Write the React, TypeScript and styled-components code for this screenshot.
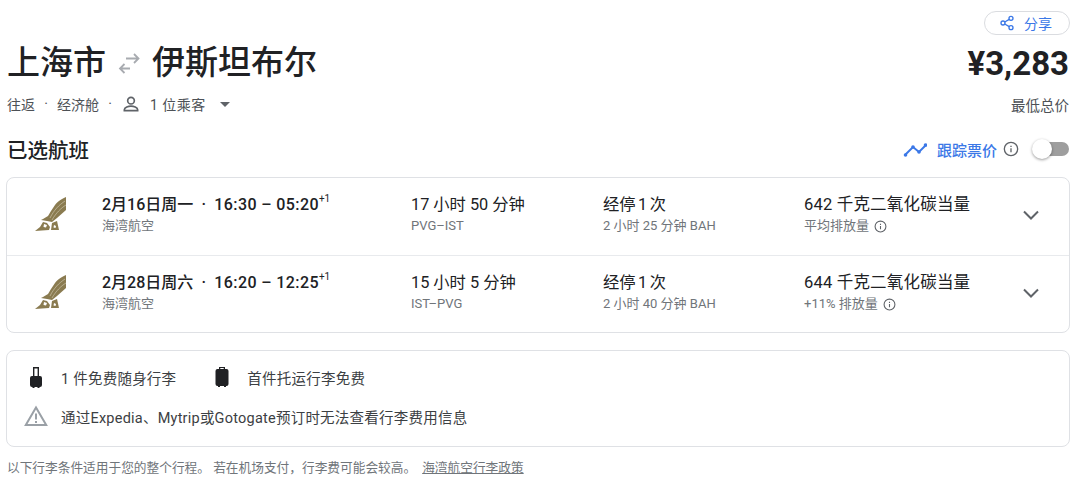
import React from "react";
import styled, { createGlobalStyle } from "styled-components";

const Global = createGlobalStyle`
  html, body { margin: 0; padding: 0; background: #fff; }
  body { font-family: Roboto, "Noto Sans CJK SC", sans-serif; color: #202124; }
`;

const Page = styled.div`
  width: 1080px;
  height: 485px;
  overflow: hidden;
  box-sizing: border-box;
  padding: 11px 10px 0 6px;
  display: flex;
  flex-direction: column;
`;
const ShareRow = styled.div`
  display: flex;
  justify-content: flex-end;
`;
const ShareButton = styled.div`
  width: 86px;
  height: 24px;
  box-sizing: border-box;
  border: 1px solid #dadce0;
  border-radius: 12px;
  display: flex;
  align-items: center;
  padding-left: 14px;
  gap: 9px;
  color: #3b78e7;
  font-size: 14px;
`;
const HeadRow = styled.div`
  display: flex;
  justify-content: space-between;
  align-items: center;
  height: 56px;
`;
const Title = styled.div`
  display: flex;
  align-items: center;
  gap: 11px;
  font-size: 33px;
  font-weight: 500;
  line-height: 56px;
  padding-left: 1px;
`;
const Price = styled.div`
  font-size: 33px;
  font-weight: 700;
  padding-right: 1px;
`;
const SubRow = styled.div`
  display: flex;
  justify-content: space-between;
  align-items: center;
  height: 26px;
  padding-left: 1px;
  font-size: 14px;
  color: #4d5156;
`;
const Meta = styled.div`
  display: flex;
  align-items: center;
`;
const Dot = styled.span`
  width: 22px;
  text-align: center;
`;
const Pax = styled.span`
  margin-left: 9px;
  letter-spacing: 0.5px;
`;
const Caret = styled.span`
  margin-left: 14px;
  width: 0;
  height: 0;
  border-left: 5px solid transparent;
  border-right: 5px solid transparent;
  border-top: 5px solid #5f6368;
`;
const LowPrice = styled.div`
  padding-right: 1px;
  font-size: 14.500px;
`;
const SectionRow = styled.div`
  display: flex;
  justify-content: space-between;
  align-items: center;
  height: 34px;
  margin-top: 15px;
  padding-left: 1px;
`;
const SectionTitle = styled.div`
  font-size: 20.500px;
  font-weight: 500;
`;
const Track = styled.div`
  display: flex;
  align-items: center;
  color: #3b78e7;
  font-size: 15px;
  font-weight: 500;
`;
const TrackLabel = styled.span`
  margin-left: 10px;
`;
const InfoWrap = styled.span<{ $ml: number }>`
  display: inline-flex;
  margin-left: ${(p) => p.$ml}px;
  color: #5f6368;
`;
const Switch = styled.div`
  position: relative;
  margin-left: 14px;
  width: 36px;
  height: 14px;
  border-radius: 7px;
  background: #9e9e9e;
  margin-right: 1px;
`;
const Knob = styled.div`
  position: absolute;
  left: -1px;
  top: -3px;
  width: 20px;
  height: 20px;
  border-radius: 50%;
  background: #fff;
  box-shadow: 0 1px 3px rgba(0, 0, 0, 0.4);
`;
const Card = styled.div`
  margin-top: 11px;
  border: 1px solid #dfe1e5;
  border-radius: 8px;
  box-sizing: border-box;
`;
const Row = styled.div`
  height: 77px;
  box-sizing: border-box;
  display: grid;
  grid-template-columns: 95px 309px 192px 201px 1fr 50px;
  padding-top: 15px;
  & + & {
    border-top: 1px solid #e8eaed;
  }
`;
const LogoCell = styled.div`
  padding: 3px 0 0 26px;
`;
const Cell = styled.div`
  display: flex;
  flex-direction: column;
`;
const Main = styled.div`
  font-size: 16.300px;
  line-height: 24px;
  color: #202124;
  white-space: nowrap;
`;
const StopMain = styled(Main)`
  word-spacing: -1.500px;
`;
const Co2Main = styled(Main)`
  font-size: 16.500px;
  letter-spacing: 0.200px;
`;
const BoldMain = styled(Main)`
  font-weight: 500;
  font-size: 16px;
  display: flex;
  align-items: baseline;
`;
const Sep = styled.span`
  width: 21px;
  text-align: center;
`;
const Times = styled.span`
  letter-spacing: 0.400px;
`;
const Sup = styled.sup`
  font-size: 10px;
  line-height: 0;
  font-weight: 400;
  position: relative;
  top: -1px;
  align-self: flex-start;
  margin-top: 7px;
`;
const Sub = styled.div`
  font-size: 13px;
  line-height: 20px;
  margin-top: -1px;
  color: #70757a;
  white-space: nowrap;
  display: flex;
  align-items: center;
`;
const Chevron = styled.div`
  padding-top: 10px;
  color: #5f6368;
`;
const Bag = styled.div`
  margin-top: 17px;
  height: 97px;
  box-sizing: border-box;
  border: 1px solid #dfe1e5;
  border-radius: 8px;
  padding: 14px 0 0 17px;
  display: flex;
  flex-direction: column;
  gap: 15px;
  font-size: 14.500px;
  letter-spacing: 0.230px;
  color: #3c4043;
`;
const BagRow = styled.div`
  display: flex;
  align-items: center;
  height: 24px;
`;
const BagItem = styled.div`
  display: flex;
  align-items: center;
  gap: 13px;
  margin-right: 34px;
`;
const IconBox = styled.span`
  width: 24px;
  display: inline-flex;
  justify-content: center;
`;
const Foot = styled.div`
  margin-top: 12px;
  padding-left: 1px;
  font-size: 12.700px;
  line-height: 18px;
  color: #70757a;
`;
const FootLink = styled.span`
  margin-left: 6px;
  text-decoration: underline;
`;

const Info = ({ s = 14 }: { s?: number }) => (
  <svg width={s} height={s} viewBox="0 0 24 24" fill="none" stroke="currentColor" strokeWidth="2">
    <circle cx="12" cy="12" r="10" />
    <path d="M12 11v6M12 7v2" />
  </svg>
);

const Logo = () => (
  <svg width="36" height="38" viewBox="0 0 36 38">
    <path
      fill="#8a7b50"
      d="M33 1 C27 4 24 6 22 9 L18 15 L15 20 L10 23 L8 24 L14 25 L19 26 L24 22 L33 14 Z"
    />
    <path stroke="#e4dfcd" strokeWidth="0.500" fill="none" d="M32 5 C26 9 21 14 17 22 M33 9 C28 12 23 17 19 24" />
    <path fill="#8a7b50" d="M14 27 L10 26 L7 31 L2 35 L16 34 L17 31 Z" />
    <path fill="#8a7b50" d="M19 27 L24 25 L26 34 L18 34 Z" />
    <path fill="#fff" d="M11 28l3 1-1 2.500-2.500-.500zM21 29l2 1-.500 2-2-.500z" />
  </svg>
);

const flights = [
  {
    date: "2月16日周一",
    time: "16:30 – 05:20",
    dur: "17 小时 50 分钟",
    route: "PVG–IST",
    stop: "2 小时 25 分钟 BAH",
    co2: "642 千克二氧化碳当量",
    note: "平均排放量",
  },
  {
    date: "2月28日周六",
    time: "16:20 – 12:25",
    dur: "15 小时 5 分钟",
    route: "IST–PVG",
    stop: "2 小时 40 分钟 BAH",
    co2: "644 千克二氧化碳当量",
    note: "+11% 排放量",
  },
];

export default function App() {
  return (
    <Page>
      <Global />
      <ShareRow>
        <ShareButton>
          <svg width="16" height="16" viewBox="0 0 24 24" fill="none" stroke="#3b78e7" strokeWidth="2">
            <circle cx="18" cy="5" r="3" />
            <circle cx="6" cy="12" r="3" />
            <circle cx="18" cy="19" r="3" />
            <path d="M8.600 10.500l6.800-4M8.600 13.500l6.800 4" />
          </svg>
          分享
        </ShareButton>
      </ShareRow>
      <HeadRow>
        <Title>
          <span>上海市</span>
          <svg width="24" height="24" viewBox="0 0 24 24" fill="none" stroke="#a8abb0" strokeWidth="1.800">
            <path d="M13 17.500H3M7.500 13l-4.500 4.500 4.500 4.500M9 7.500h12M17 3l4.500 4.500L17 12" />
          </svg>
          <span>伊斯坦布尔</span>
        </Title>
        <Price>¥3,283</Price>
      </HeadRow>
      <SubRow>
        <Meta>
          <span>往返</span>
          <Dot>·</Dot>
          <span>经济舱</span>
          <Dot>·</Dot>
          <svg width="20" height="20" viewBox="0 0 24 24" fill="none" stroke="#5f6368" strokeWidth="2">
            <circle cx="12" cy="8" r="4" />
            <path d="M4 20v-1c0-3 5-4.500 8-4.500s8 1.500 8 4.500v1z" />
          </svg>
          <Pax>1 位乘客</Pax>
          <Caret />
        </Meta>
        <LowPrice>最低总价</LowPrice>
      </SubRow>
      <SectionRow>
        <SectionTitle>已选航班</SectionTitle>
        <Track>
          <svg width="24" height="24" viewBox="0 0 24 24" fill="none" stroke="#3b78e7" strokeWidth="2">
            <path d="M2 18l8-8 6 5 7-7" />
            <circle cx="2.500" cy="18" r="1.800" fill="#3b78e7" stroke="none" />
            <circle cx="10" cy="10" r="1.800" fill="#3b78e7" stroke="none" />
            <circle cx="16" cy="15" r="1.800" fill="#3b78e7" stroke="none" />
            <circle cx="22.500" cy="8" r="1.800" fill="#3b78e7" stroke="none" />
          </svg>
          <TrackLabel>跟踪票价</TrackLabel>
          <InfoWrap $ml={6}>
            <Info s={16} />
          </InfoWrap>
          <Switch>
            <Knob />
          </Switch>
        </Track>
      </SectionRow>
      <Card>
        {flights.map((f) => (
          <Row key={f.date}>
            <LogoCell>
              <Logo />
            </LogoCell>
            <Cell>
              <BoldMain>
                {f.date}
                <Sep>·</Sep>
                <Times>{f.time}</Times>
                <Sup>+1</Sup>
              </BoldMain>
              <Sub>海湾航空</Sub>
            </Cell>
            <Cell>
              <Main>{f.dur}</Main>
              <Sub>{f.route}</Sub>
            </Cell>
            <Cell>
              <StopMain>经停 1 次</StopMain>
              <Sub>{f.stop}</Sub>
            </Cell>
            <Cell>
              <Co2Main>{f.co2}</Co2Main>
              <Sub>
                {f.note}
                <InfoWrap $ml={5}>
                  <Info s={13} />
                </InfoWrap>
              </Sub>
            </Cell>
            <Chevron>
              <svg width="24" height="24" viewBox="0 0 24 24" fill="none" stroke="currentColor" strokeWidth="2">
                <path d="M5 8.500l7 7 7-7" />
              </svg>
            </Chevron>
          </Row>
        ))}
      </Card>
      <Bag>
        <BagRow>
          <BagItem>
            <IconBox>
              <svg width="16" height="22" viewBox="0 0 16 22">
                <path fillRule="evenodd" fill="#202124" d="M5 1h6v9h1a2 2 0 0 1 2 2v7a2 2 0 0 1-2 2h-.5v1h-2v-1H6.500v1h-2v-1H4a2 2 0 0 1-2-2v-7a2 2 0 0 1 2-2h1zm1.400 1.400V10h3.200V2.400z" />
              </svg>
            </IconBox>
            1 件免费随身行李
          </BagItem>
          <BagItem>
            <IconBox>
              <svg width="16" height="22" viewBox="0 0 16 22">
                <path fill="#202124" d="M5 1h6v2h1.500a2 2 0 0 1 2 2v13a2 2 0 0 1-2 2H12v1h-2v-1H6v1H4v-1h-.5a2 2 0 0 1-2-2V5a2 2 0 0 1 2-2H5zm1.300 1V3h3.400V2z" />
              </svg>
            </IconBox>
            首件托运行李免费
          </BagItem>
        </BagRow>
        <BagRow>
          <BagItem>
            <IconBox>
              <svg width="24" height="22" viewBox="0 0 24 22" fill="none" stroke="#9aa0a6" strokeWidth="2">
                <path d="M12 2.500L1.800 20h20.400z" />
                <path d="M12 8.500v6M12 16v2" />
              </svg>
            </IconBox>
            通过Expedia、Mytrip或Gotogate预订时无法查看行李费用信息
          </BagItem>
        </BagRow>
      </Bag>
      <Foot>
        以下行李条件适用于您的整个行程。 若在机场支付，行李费可能会较高。
        <FootLink>海湾航空行李政策</FootLink>
      </Foot>
    </Page>
  );
}
